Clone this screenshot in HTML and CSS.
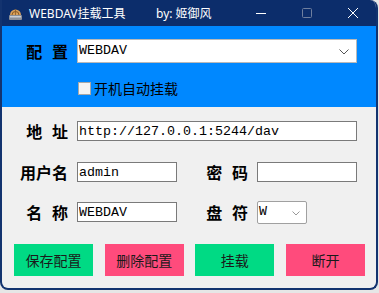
FILE: index.html
```
<!DOCTYPE html>
<html lang="zh-CN">
<head>
  <meta charset="UTF-8">
  <title>WEBDAV挂载工具</title>
  <link rel="stylesheet" href="styles.css">
</head>
<body>
  <div class="window">
    <div class="titlebar">
      <svg class="app-icon" width="15" height="15" viewBox="0 0 15 15">
        <rect x="1" y="9" width="13" height="5" rx="1" fill="#8a8f99"/>
        <rect x="2" y="10" width="11" height="1.5" fill="#c9ced6"/>
        <path d="M2 9 A5.5 5.5 0 0 1 13 9 Z" fill="#d9a05a"/>
        <path d="M4 9 A3.5 3.5 0 0 1 11 9" fill="none" stroke="#8a5a26" stroke-width="1"/>
        <path d="M7.5 3.5 V9" stroke="#8a5a26" stroke-width="0.8"/>
      </svg>
      <span class="title">WEBDAV挂载工具</span>
      <span class="author">by: 姬御风</span>
      <div class="controls">
        <svg class="ctl" width="46" height="26" viewBox="0 0 46 26"><path d="M18 13.5 H28" stroke="#fff" stroke-width="1"/></svg>
        <svg class="ctl" width="46" height="26" viewBox="0 0 46 26"><rect x="18.5" y="8.5" width="9" height="9" rx="1" fill="none" stroke="#6f7f9f" stroke-width="1"/></svg>
        <svg class="ctl" width="46" height="26" viewBox="0 0 46 26"><path d="M18 8 L28 18 M28 8 L18 18" stroke="#fff" stroke-width="1"/></svg>
      </div>
    </div>

    <div class="panel-top">
      <div class="row">
        <label class="label">配 置</label>
        <div class="select-wrap wide">
          <span class="select-value">WEBDAV</span>
          <svg class="chevron" width="10" height="6" viewBox="0 0 10 6"><path d="M0.5 0.5 L5 5 L9.5 0.5" fill="none" stroke="#555" stroke-width="1"/></svg>
        </div>
      </div>
      <div class="row check-row">
        <span class="checkbox"></span>
        <span class="check-text">开机自动挂载</span>
      </div>
    </div>

    <div class="panel-main">
      <div class="row">
        <label class="label">地 址</label>
        <input class="field wide" value="http://127.0.0.1:5244/dav">
      </div>
      <div class="row">
        <label class="label">用户名</label>
        <input class="field" value="admin">
        <label class="label label-2">密 码</label>
        <input class="field" value="">
      </div>
      <div class="row">
        <label class="label">名 称</label>
        <input class="field" value="WEBDAV">
        <label class="label label-2">盘 符</label>
        <div class="select-wrap small">
          <span class="select-value">W</span>
          <svg class="chevron" width="8" height="5" viewBox="0 0 8 5"><path d="M0.5 0.5 L4 4 L7.5 0.5" fill="none" stroke="#999" stroke-width="1"/></svg>
        </div>
      </div>
      <div class="buttons">
        <button class="btn green">保存配置</button>
        <button class="btn pink">删除配置</button>
        <button class="btn green">挂载</button>
        <button class="btn pink">断开</button>
      </div>
    </div>
  </div>
</body>
</html>
```

FILE: styles.css
```
body {
  margin: 0;
  background: #e6e6e6;
  font-family: "Noto Sans", "Noto Sans CJK SC", sans-serif;
}

.window {
  width: 378px;
  height: 290px;
  box-sizing: border-box;
  border: 2px solid #13336f;
  border-top: none;
  border-radius: 0 8px 8px 8px;
  overflow: hidden;
  background: #f0f0f0;
}

.titlebar {
  height: 26px;
  background: #0c2d6b;
  color: #fff;
  display: flex;
  align-items: center;
  font-size: 12px;
  margin: 0 -2px;
}
.app-icon {
  margin: 0 6px 0 8px;
}
.title {
  width: 127px;
}
.controls {
  margin-left: auto;
  display: flex;
  margin-right: 2px;
}
.ctl {
  display: block;
}

.panel-top {
  background: #0088ff;
  height: 81px;
  padding-top: 13px;
  box-sizing: border-box;
}

.row {
  display: flex;
  align-items: center;
  line-height: 20px;
}

.label {
  width: 66px;
  height: 20px;
  text-align: right;
  font-family: "Noto Sans CJK SC", sans-serif;
  font-weight: bold;
  font-size: 16px;
  line-height: 20px;
  word-spacing: 6px;
  color: #000;
  margin-right: 9px;
  flex-shrink: 0;
}
.label-2 {
  width: 71px;
}

.select-wrap {
  position: relative;
  height: 24px;
  box-sizing: border-box;
  background: #fff;
  border: 1px solid #b9b9b9;
  display: flex;
  align-items: center;
}
.select-wrap.wide {
  width: 280px;
}
.select-wrap.small {
  width: 50px;
  height: 23px;
  border-color: #a0a0a0;
  border-radius: 2px;
}
.select-value {
  font-family: "Liberation Mono", monospace;
  font-size: 13.33px;
  padding-left: 1px;
}
.chevron {
  position: absolute;
  right: 7px;
  top: 9px;
}
.small .chevron {
  right: 6px;
}

.check-row {
  margin-top: 15px;
  padding-left: 76px;
}
.checkbox {
  width: 11px;
  height: 11px;
  border: 1px solid #a8a8a8;
  background: #f4f4f4;
  margin-right: 3px;
}
.check-text {
  font-family: "Noto Sans CJK SC", sans-serif;
  font-size: 14px;
  color: #000;
}

.panel-main {
  padding-top: 14px;
}
.panel-main .row {
  height: 20px;
  margin-bottom: 21px;
}
.panel-main .row:nth-child(2) {
  margin-bottom: 20px;
}

.field {
  width: 100px;
  height: 20px;
  box-sizing: border-box;
  border: 1px solid #7a7a7a;
  background: #fff;
  padding: 0 1px;
  font-family: "Liberation Mono", monospace;
  font-size: 13.33px;
  color: #000;
  margin: 0;
  outline: none;
}
.field.wide {
  width: 280px;
}

.buttons {
  display: flex;
  justify-content: space-between;
  width: 351px;
  margin: 0 0 0 12px;
  padding-top: 1px;
}
.btn {
  width: 79px;
  height: 32px;
  border: none;
  font-family: "Noto Sans CJK SC", sans-serif;
  font-size: 14px;
  color: #1a1a1a;
  padding: 0;
}
.btn.green {
  background: #00da84;
}
.btn.pink {
  background: #ff4b7c;
}
```
